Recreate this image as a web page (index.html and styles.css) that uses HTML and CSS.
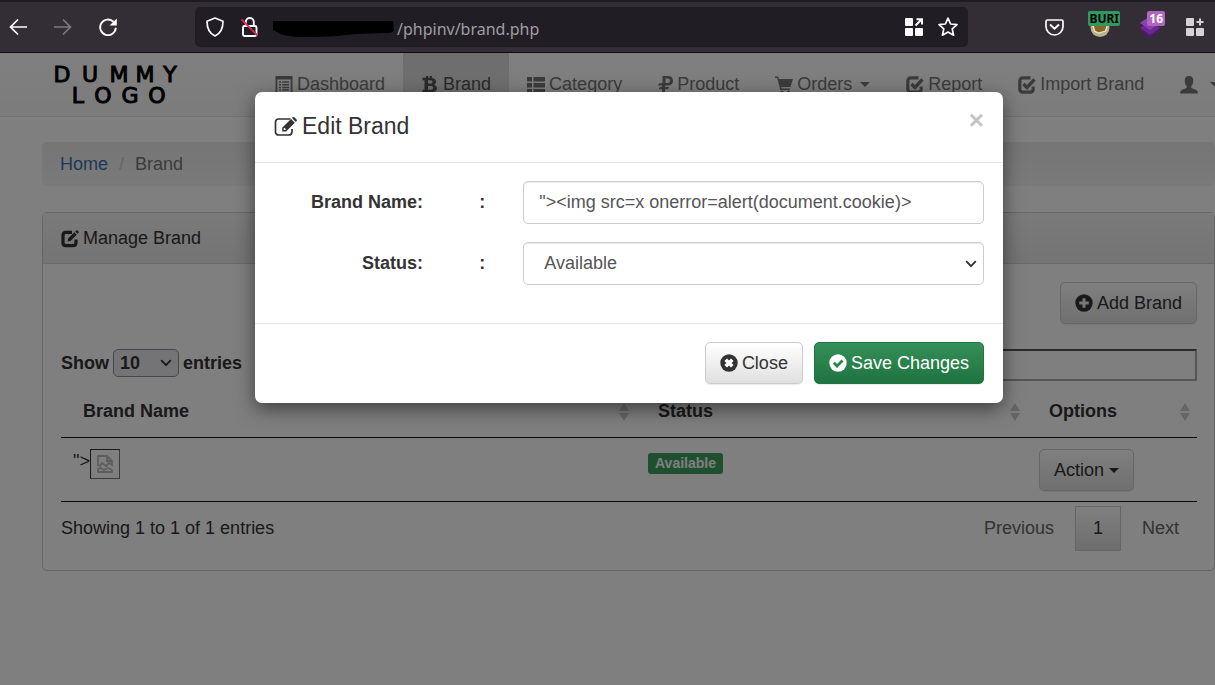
FILE: index.html
```html
<!DOCTYPE html>
<html lang="en">
<head>
<meta charset="utf-8">
<title>Brand</title>
<link rel="stylesheet" href="styles.css">
</head>
<body>
<svg class="defs" aria-hidden="true">
  <symbol id="i-check" viewBox="0 0 18 18"><path d="M12.5 1.8H5Q1.8 1.8 1.8 5v8Q1.8 16.2 5 16.2h7q3.200 0 3.200-3.200V10.500" fill="none" stroke="currentColor" stroke-width="3.200"/><path d="M5.500 8 9 11.500 16.500 3.300" fill="none" stroke="currentColor" stroke-width="3.400"/></symbol>
  <symbol id="i-edit" viewBox="0 0 18 18"><path d="M11 2.300H5Q2 2.300 2 5.300v7.400Q2 15.700 5 15.700h7q3 0 3-3V9.500" fill="none" stroke="currentColor" stroke-width="3.200"/><path d="M6.500 11.500 7.300 8.300 13.300 2.300 15.700 4.700 9.700 10.700z M14.200 1.500 15.300.4Q16 0 16.600.6l.9.9q.5.600 0 1.200L16.500 3.800z" fill="currentColor"/></symbol>
  <symbol id="i-caret" viewBox="0 0 10 5"><path d="M0 0h10L5 5z" fill="currentColor"/></symbol>
  <symbol id="i-chev" viewBox="0 0 12 8"><path d="M1.200 1.200 6 6.200l4.800-5" fill="none" stroke="currentColor" stroke-width="1.800"/></symbol>
  <symbol id="i-sort" viewBox="0 0 10 18"><path d="M5 0 10 8H0z M0 10h10L5 18z" fill="currentColor"/></symbol>
</svg>

<header class="browser">
  <div class="browser-nav">
    <button class="tool" aria-label="Back"><svg width="18" height="18" viewBox="0 0 18 18"><path d="M18 9H1.500M9 1.500 1.500 9 9 16.500" fill="none" stroke="currentColor" stroke-width="1.700"/></svg></button>
    <button class="tool tool-off" aria-label="Forward"><svg width="18" height="18" viewBox="0 0 18 18"><path d="M0 9h16.500M9 1.500 16.500 9 9 16.500" fill="none" stroke="currentColor" stroke-width="1.700"/></svg></button>
    <button class="tool" aria-label="Reload"><svg width="18" height="18" viewBox="0 0 18 18"><path d="M14.500 3.800A7.800 7.800 0 1 0 16.800 9.800" fill="none" stroke="currentColor" stroke-width="1.900"/><path d="M17.800.4V7.500h-7.200z" fill="currentColor"/></svg></button>
  </div>
  <div class="url-bar">
    <svg width="18" height="20" viewBox="0 0 18 20"><path d="M9 1 17 4.200C17 11.500 14.500 16.500 9 19 3.500 16.500 1 11.500 1 4.200z" fill="none" stroke="currentColor" stroke-width="1.700" stroke-linejoin="round"/></svg>
    <svg class="lock" width="18" height="20" viewBox="0 0 18 20"><rect x="2" y="9" width="13.500" height="10" rx="1.500" fill="none" stroke="currentColor" stroke-width="1.900"/><path d="M4.800 8V5a4 4 0 0 1 8 0v4" fill="none" stroke="currentColor" stroke-width="1.900"/><path d="M.5 2.500 16.500 18.500" stroke="#e22850" stroke-width="1.800"/></svg>
    <svg class="redacted" width="124" height="20" viewBox="0 0 124 20"><path d="M0 4h120l1 9q-1 3-6 3l-33 1q-20 3-48 3Q10 20 4 15L0 13z" fill="#000"/></svg>
    <input class="url" aria-label="Address" value="/phpinv/brand.php">
    <svg width="18" height="18" viewBox="0 0 18 18"><path d="M1 0h6q1 0 1 1v6q0 1-1 1H1Q0 8 0 7V1Q0 0 1 0zM1 10h6q1 0 1 1v6q0 1-1 1H1q-1 0-1-1v-6q0-1 1-1zM11 10h6q1 0 1 1v6q0 1-1 1h-6q-1 0-1-1v-6q0-1 1-1z" fill="currentColor"/><path d="M10.500 7.500 16 2M11.500 1.200H17V6.500" fill="none" stroke="currentColor" stroke-width="2"/></svg>
    <svg class="star" width="20" height="20" viewBox="0 0 20 20"><path d="M10 1.200 12.600 7l6.400.7-4.800 4.200 1.400 6.300L10 15l-5.600 3.200 1.400-6.300L1 7.700 7.400 7z" fill="none" stroke="currentColor" stroke-width="1.700" stroke-linejoin="round"/></svg>
  </div>
  <div class="extensions">
    <svg width="19" height="17" viewBox="0 0 19 17"><path d="M2.500 1h14Q18 1 18 2.500V7.500a8.500 8.500 0 0 1-17 0v-5Q1 1 2.500 1z" fill="none" stroke="currentColor" stroke-width="1.700"/><path d="M5 5.500 9.500 9.800 14 5.500" fill="none" stroke="currentColor" stroke-width="1.900"/></svg>
    <span class="ext"><svg width="20" height="20" viewBox="0 0 20 20"><circle cx="10" cy="9.500" r="9.500" fill="#b9b28e"/><path d="M3 7 4.500 13l4 2 7-2 2-6z" fill="#8a6424" stroke="#e8e4cc" stroke-width="1.300"/></svg><span class="tag tag-green">BURI</span></span>
    <span class="ext ext-layers"><svg width="20" height="22" viewBox="0 0 20 22"><path d="M0 15 10 8l10 7-10 7z" fill="#4f1a6e"/><path d="M0 12 10 5l10 7-10 7z" fill="#6d2794"/><path d="M0 7 10 0l10 7-10 7z" fill="#8d3fb2"/></svg><span class="tag tag-purple">16</span></span>
    <svg class="ext-grid" width="18" height="18" viewBox="0 0 18 18"><path d="M1 0h6q1 0 1 1v6q0 1-1 1H1Q0 8 0 7V1Q0 0 1 0zM1 10h6q1 0 1 1v6q0 1-1 1H1q-1 0-1-1v-6q0-1 1-1zM11 10h6q1 0 1 1v6q0 1-1 1h-6q-1 0-1-1v-6q0-1 1-1z" fill="currentColor"/><path d="M14 .5v7M10.500 4h7" stroke="currentColor" stroke-width="2"/></svg>
  </div>
</header>

<div class="viewport">
  <nav class="navbar">
    <a class="logo" href="#"><svg width="140" height="48" viewBox="0 0 140 48"><text class="logo-text" y="21" x="14 42 71 97 122">DUMMY</text><text class="logo-text" y="42" x="30 55 82 109">LOGO</text></svg></a>
    <a class="nav-link" href="#"><svg class="icon" viewBox="0 0 18 18"><path fill-rule="evenodd" d="M.5 0h17v18H.5zM2.300 3.500v12.700h13.400V3.500z" fill="currentColor"/><path d="M4 6h2M7.200 6H14M4 8.700h2M7.200 8.700H14M4 11.400h2M7.200 11.400H14M4 14h2M7.200 14H14" stroke="currentColor" stroke-width="1.500"/></svg>Dashboard</a>
    <a class="nav-link active" href="#"><svg class="icon" viewBox="0 0 18 18"><path fill-rule="evenodd" d="M1.500 1.800H5V0h2.200v1.800h1.600V0H11v2q4 .5 4 3.800 0 2-1.800 2.900Q16 9.700 16 12.200q0 3.600-5 4V18H8.800v-1.800H7.200V18H5v-1.800H1.500v-2.400H3.500V4.200h-2zM7 4.300v3.300h2.500q2 0 2-1.700T9.500 4.300zM7 10v3.700h3q2.200 0 2.200-1.900T10 10z" fill="currentColor"/></svg>Brand</a>
    <a class="nav-link" href="#"><svg class="icon" viewBox="0 0 18 18"><path d="M0 1h5v4.500H0zM6.500 1H18v4.500H6.500zM0 7h5v4.500H0zM6.500 7H18v4.500H6.500zM0 13h5v4.500H0zM6.500 13H18v4.500H6.500z" fill="currentColor"/></svg>Category</a>
    <a class="nav-link" href="#"><svg class="icon icon-slim" viewBox="0 0 15 18"><path fill-rule="evenodd" d="M4.500 0H10q5 0 5 4.700T10 9.500H7.500L6.900 11H11l-1 2.200H7V18H4v-4.800H.8L1.800 11H4V9.500H0l1-2.300h3.500zM7.500 2.500V7h2.200Q12 7 12 4.700T9.700 2.500z" fill="currentColor"/></svg>Product</a>
    <a class="nav-link" href="#"><svg class="icon" viewBox="0 0 18 18"><path d="M0 .5h3.200L4 3h14l-2.500 8H6.200l.5 1.500H15V14H5.300L2.200 2H0z" fill="currentColor"/><circle cx="7" cy="16" r="1.600" fill="currentColor"/><circle cx="13.500" cy="16" r="1.600" fill="currentColor"/></svg>Orders<svg class="caret"><use href="#i-caret"/></svg></a>
    <a class="nav-link" href="#"><svg class="icon"><use href="#i-check"/></svg>Report</a>
    <a class="nav-link" href="#"><svg class="icon"><use href="#i-check"/></svg>Import Brand</a>
    <a class="nav-link" href="#" aria-label="Account"><svg class="icon" viewBox="0 0 18 18"><path d="M9 0q4.300 0 4.300 4.800 0 3.500-2 5.500v1.500q1.500 1 4.200 1.800Q18 14.500 18 17.500H0q0-3 2.500-3.900 2.700-.8 4.200-1.800v-1.500q-2-2-2-5.500Q4.700 0 9 0z" fill="currentColor"/></svg><svg class="caret"><use href="#i-caret"/></svg></a>
  </nav>

  <main class="content">
    <ol class="breadcrumb"><li><a href="#">Home</a></li><li class="sep">/</li><li>Brand</li></ol>
    <section class="panel">
      <h1 class="panel-heading"><svg class="icon"><use href="#i-edit"/></svg>Manage Brand</h1>
      <div class="panel-body">
        <div class="toolbar"><button class="btn"><svg class="icon" viewBox="0 0 18 18"><circle cx="9" cy="9" r="8.700" fill="currentColor"/><path d="M9 4.200v9.600M4.200 9h9.600" stroke="#eee" stroke-width="3"/></svg>Add Brand</button></div>
        <div class="filters">
          <label class="length">Show <span class="picker"><select class="length-select"><option>10</option></select><svg class="chev"><use href="#i-chev"/></svg></span> entries</label>
          <input class="search" type="search" aria-label="Search">
        </div>
        <table class="brands">
          <thead><tr>
            <th><span class="th">Brand Name<svg class="sort"><use href="#i-sort"/></svg></span></th>
            <th class="col-status"><span class="th">Status<svg class="sort"><use href="#i-sort"/></svg></span></th>
            <th class="col-options"><span class="th">Options<svg class="sort"><use href="#i-sort"/></svg></span></th>
          </tr></thead>
          <tbody><tr>
            <td><span class="name-cell">"&gt;<span class="broken"><svg width="18" height="20" viewBox="0 0 18 20"><path d="M2 11V2h9l5 5v4l-3-2-3 3-4-3-2 3zM11 2v5h5M2 18v-3l3-1 3 2 4-2 4 2v2z" fill="none" stroke="currentColor" stroke-width="1.800"/></svg></span></span></td>
            <td><span class="label">Available</span></td>
            <td><button class="btn">Action<svg class="caret caret-near"><use href="#i-caret"/></svg></button></td>
          </tr></tbody>
        </table>
        <div class="table-foot">
          <p class="info">Showing 1 to 1 of 1 entries</p>
          <div class="pages"><button class="page">Previous</button><button class="page current">1</button><button class="page">Next</button></div>
        </div>
      </div>
    </section>
  </main>

  <div class="backdrop">
    <form class="modal" role="dialog" aria-labelledby="modal-title">
      <div class="modal-header">
        <h2 class="modal-title" id="modal-title"><svg class="icon-lg" viewBox="0 0 24 20"><path d="M16.500 2H5Q1.500 2 1.500 5.300v9.400Q1.500 18 5 18h9.700q3.300 0 3.300-3.300V12" fill="none" stroke="currentColor" stroke-width="1.700"/><path fill-rule="evenodd" d="M8.200 14.500V10.800L17 2l3.800 3.800-8.700 8.700zM18 1l.8-.8q.8-.5 1.500.1l2.300 2.300q.6.700 0 1.500l-.8.8zM9.700 11.500v1.500h1.500l.8-.8-1.500-1.500z" fill="currentColor"/></svg>Edit Brand</h2>
        <button class="close" type="button" aria-label="Dismiss">×</button>
      </div>
      <div class="modal-body">
        <label for="brand-name">Brand Name:</label><span class="colon">:</span>
        <div class="field"><input class="control" id="brand-name" value="&quot;&gt;&lt;img src=x onerror=alert(document.cookie)&gt;"></div>
        <label for="status">Status:</label><span class="colon">:</span>
        <div class="field picker"><select class="control control-select" id="status"><option>Available</option></select><svg class="chev"><use href="#i-chev"/></svg></div>
      </div>
      <div class="modal-footer">
        <button class="btn" type="button"><svg class="icon" viewBox="0 0 18 18"><circle cx="9" cy="9" r="8.700" fill="currentColor"/><path d="M5.700 5.700l6.600 6.600M12.300 5.700l-6.600 6.600" stroke="#fff" stroke-width="3.600"/></svg>Close</button>
        <button class="btn btn-success" type="button"><svg class="icon" viewBox="0 0 18 18"><circle cx="9" cy="9" r="8.700" fill="currentColor"/><path d="M4.800 8.800 8 12l5.500-5.500" fill="none" stroke="#2a854c" stroke-width="2.800"/></svg>Save Changes</button>
      </div>
    </form>
  </div>
</div>
</body>
</html>
```

FILE: styles.css
```css
* { box-sizing: border-box; }
body {
  margin: 0;
  min-height: 100vh;
  display: flex;
  flex-direction: column;
  overflow: hidden;
  background: #fff;
  color: #333;
  font: 18px/25px "Liberation Sans", Arial, sans-serif;
}
button, input, select { font: inherit; color: inherit; margin: 0; }
svg { flex: none; }
a { color: #3f70b5; text-decoration: none; }
.defs { position: absolute; width: 0; height: 0; }

/* browser chrome */
.browser {
  display: flex;
  align-items: center;
  height: 53px;
  padding: 0 11px 0 9px;
  background: #332e35;
  border-top: 2px solid #1f1b23;
  border-bottom: 1px solid #0d0a10;
  color: #fbfbfe;
}
.browser-nav { display: flex; gap: 27px; width: 186px; }
.tool { display: flex; padding: 0; border: 0; background: none; }
.tool-off { color: #7d7980; }
.url-bar {
  flex: 1;
  display: flex;
  align-items: center;
  height: 40px;
  padding: 0 10px 0 11px;
  border-radius: 5px;
  background: #211d25;
}
.lock { margin-left: 17px; }
.redacted { margin-left: 14px; }
.url {
  flex: 1;
  min-width: 0;
  padding: 3px 0 0;
  border: 0;
  background: none;
  color: #a09da3;
  font: 16px/24px "Noto Sans", "Open Sans", sans-serif;
}
.star { margin-left: 15px; }
.extensions { display: flex; align-items: center; margin-left: 77px; }
.ext { position: relative; display: flex; width: 30px; height: 30px; margin-left: 26px; align-items: flex-end; padding: 0 0 4px; }
.ext-layers { width: 25px; margin-left: 20px; }
.ext-grid { margin-left: 21px; color: #d6d2d8; }
.tag {
  position: absolute;
  top: -1px;
  right: 0;
  padding: 0 2px;
  border-radius: 2px;
  font: bold 12px/15px "Noto Sans", sans-serif;
}
.tag-green { padding: 0 1px; background: #2f9a60; color: #000; }
.tag-purple { background: #b065c0; color: #fff; }

/* page */
.viewport { position: relative; flex: 1; }
.navbar {
  display: flex;
  height: 64px;
  padding-left: 42px;
  overflow: hidden;
  background: linear-gradient(#fff, #f8f8f8);
  border-bottom: 1px solid #e7e7e7;
}
.logo { flex: none; width: 215px; padding: 8px 0 0 6px; }
.logo-text {
  font: 22px "DejaVu Sans", sans-serif;
  text-anchor: middle;
  fill: #000;
  stroke: #000;
  stroke-width: 1px;
}
.nav-link {
  display: flex;
  align-items: center;
  flex: none;
  padding: 0 18px;
  color: #777;
}
.active { background: linear-gradient(#dbdbdb, #e2e2e2); color: #555; }
.icon { width: 18px; height: 18px; margin-right: 4px; }
.icon-slim { width: 15px; }
.caret { width: 10px; height: 5px; margin-left: 8px; }
.caret-near { margin-left: 5px; }
.content { padding: 25px 0 0 42px; }
.breadcrumb {
  display: flex;
  gap: 11px;
  margin: 0 0 26px;
  padding: 10px 18px 9px;
  list-style: none;
  border-radius: 5px;
  background: linear-gradient(#ebebeb, #f5f5f5);
  color: #777;
}
.sep { color: #ccc; }
.panel { border: 1px solid #ccc; border-radius: 5px; }
.panel-heading {
  display: flex;
  align-items: center;
  margin: 0;
  padding: 13px 18px 12px;
  font-size: 18px;
  font-weight: 400;
  background: linear-gradient(#f5f5f5, #e8e8e8);
  border-bottom: 1px solid #d6d6d6;
}
.panel-body { padding: 18px 17px 19px 18px; }
.toolbar { display: flex; justify-content: flex-end; margin-bottom: 25px; }
.btn {
  display: inline-flex;
  align-items: center;
  height: 42px;
  padding: 0 14px;
  border: 1px solid #ccc;
  border-radius: 5px;
  background: linear-gradient(#fff, #e0e0e0);
  box-shadow: 0 1px 1px rgba(0, 0, 0, .08);
}
.btn-success { color: #fff; border-color: #217443; background: linear-gradient(#349058, #1f7340); }
.filters { display: flex; justify-content: space-between; align-items: flex-start; }
.length { display: flex; align-items: center; gap: 4px; font-weight: 700; }
.picker { display: grid; align-items: center; }
.picker > * { grid-area: 1 / 1; }
.chev { width: 12px; height: 8px; justify-self: end; margin-right: 7px; pointer-events: none; }
.length-select {
  appearance: none;
  width: 66px;
  height: 28px;
  padding: 0 6px;
  border: 1px solid #8f8f9d;
  border-radius: 5px;
  background: #e9e9ed;
}
.search { width: 230px; height: 32px; border: 2px inset #aaa; background: none; }
.brands { width: 100%; border-collapse: collapse; table-layout: fixed; margin-top: 6px; border-bottom: 1px solid #111; }
.brands th { padding: 12px 7px 13px 22px; text-align: left; border-bottom: 1px solid #111; }
.th { display: flex; align-items: center; justify-content: space-between; }
.brands td { padding: 11px 12px 10px; vertical-align: top; line-height: 0; }
.col-status { width: 391px; }
.col-options { width: 170px; }
.sort { width: 10px; height: 18px; color: #ccc; }
.name-cell { display: flex; line-height: 25px; }
.broken {
  display: flex;
  align-items: center;
  justify-content: center;
  width: 30px;
  height: 30px;
  border: 1px solid;
  border-color: #333 #777 #777 #333;
  color: #bbb;
}
.label {
  display: inline-block;
  margin-top: 4px;
  padding: 0 7px;
  border-radius: 3px;
  background: #3c9f5f;
  color: #fff;
  font-size: 14px;
  font-weight: 700;
  line-height: 21px;
}
.table-foot { display: flex; justify-content: space-between; align-items: flex-start; padding-top: 4px; }
.info { margin: 10px 0 0; }
.pages { display: flex; gap: 3px; }
.page { height: 45px; padding: 0 17px; border: 1px solid transparent; background: none; color: #666; }
.current { border-color: #cacaca; background: linear-gradient(#fff, #dcdcdc); color: #333; }

/* modal */
.backdrop {
  position: absolute;
  inset: 0;
  display: flex;
  align-items: flex-start;
  justify-content: center;
  padding: 39px 0 0 43px;
  background: rgba(0, 0, 0, .5);
}
.modal {
  width: 748px;
  border-radius: 7px;
  background: #fff;
  box-shadow: 0 6px 19px rgba(0, 0, 0, .5);
}
.modal-header {
  display: flex;
  justify-content: space-between;
  align-items: flex-start;
  padding: 18px 19px 19px;
  border-bottom: 1px solid #e5e5e5;
}
.modal-title { display: flex; align-items: center; margin: 0; font-size: 23px; font-weight: 400; line-height: 33px; }
.icon-lg { width: 24px; height: 20px; margin-right: 4px; }
.close { padding: 0; border: 0; background: none; color: #c4c4c4; font-size: 26px; font-weight: 700; line-height: 20px; }
.modal-body {
  display: grid;
  grid-template-columns: 3fr 1fr 8fr;
  row-gap: 18px;
  align-items: center;
  padding: 18px 0 38px;
  text-align: right;
  font-weight: 700;
}
.modal-body > * { padding-right: 19px; }
.modal-body > .field { padding-left: 19px; font-weight: 400; }
.control {
  width: 100%;
  height: 43px;
  padding: 0 15px;
  border: 1px solid #ccc;
  border-radius: 5px;
  background: #fff;
  color: #555;
  box-shadow: inset 0 1px 1px rgba(0, 0, 0, .08);
}
.control-select { appearance: none; padding: 0 20px; }
.modal-footer {
  display: flex;
  justify-content: flex-end;
  gap: 11px;
  padding: 18px 19px 19px;
  border-top: 1px solid #e5e5e5;
}
```
